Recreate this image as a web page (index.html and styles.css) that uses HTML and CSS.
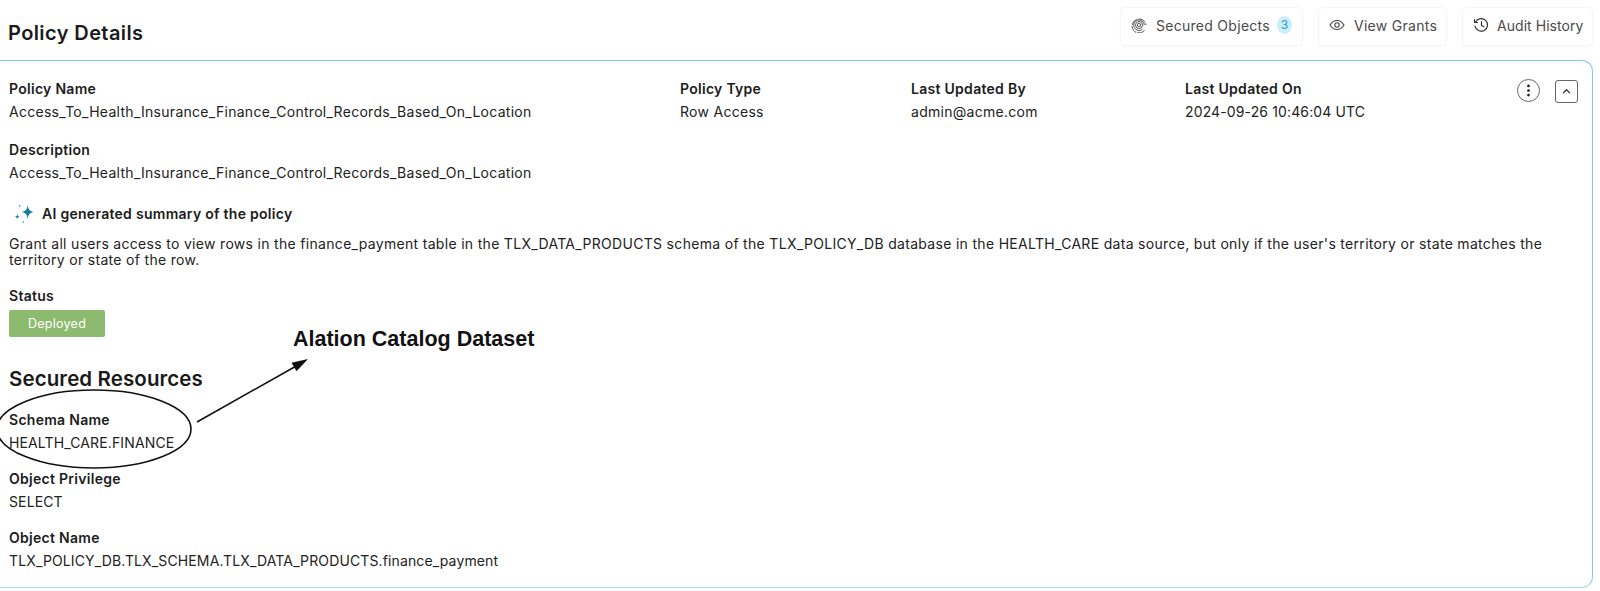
FILE: index.html
```html
<!DOCTYPE html>
<html lang="en">
<head>
<meta charset="utf-8">
<title>Policy Details</title>
<link rel="stylesheet" href="styles.css">
</head>
<body>
<header class="topbar">
  <h1 class="page-title">Policy Details</h1>
  <nav class="actions">
    <button class="action action-secured">
      <svg class="action-icon" viewBox="0 0 16 16"><g fill="none" stroke="#444" stroke-width=".9"><path d="M13.500 13.500A7 7 0 1 1 15 8" stroke-dasharray="8 1"/><path d="M11.500 12.200A5.300 5.300 0 1 1 13.300 8"/><circle cx="8" cy="8" r="3.500"/><circle cx="8" cy="8" r="1.600"/></g></svg>
      <span>Secured Objects</span><span class="count">3</span>
    </button>
    <button class="action action-grants">
      <svg class="action-icon" viewBox="0 0 16 16"><g fill="none" stroke="#444" stroke-width="1.1"><path d="M1 8c2-3.200 4.300-4.500 7-4.500S13 4.800 15 8c-2 3.200-4.300 4.500-7 4.500S3 11.200 1 8z"/><circle cx="8" cy="8" r="2.200"/></g></svg>
      <span>View Grants</span>
    </button>
    <button class="action action-audit">
      <svg class="action-icon" viewBox="0 0 16 16"><g fill="none" stroke="#333" stroke-width="1.200" stroke-linecap="round" stroke-linejoin="round"><path d="M2.600 5A6.300 6.300 0 1 1 2 9"/><path d="M1.500 2.500v3h3"/><path d="M8.500 4.800v3.600l2.400 1.400"/></g></svg>
      <span>Audit History</span>
    </button>
  </nav>
</header>

<main class="card">
  <div class="controls">
    <button class="kebab" aria-label="More"><svg viewBox="0 0 23 23"><circle cx="11.500" cy="6.500" r="1.500"/><circle cx="11.500" cy="11.500" r="1.500"/><circle cx="11.500" cy="16.500" r="1.500"/></svg></button>
    <button class="collapse" aria-label="Collapse"><svg viewBox="0 0 23 23"><path d="M8 13l3.500-3.500L15 13"/></svg></button>
  </div>

  <section class="meta-row">
    <div class="field col-name"><div class="label">Policy Name</div><div class="value">Access_To_Health_Insurance_Finance_Control_Records_Based_On_Location</div></div>
    <div class="field col-type"><div class="label">Policy Type</div><div class="value">Row Access</div></div>
    <div class="field col-by"><div class="label">Last Updated By</div><div class="value">admin@acme.com</div></div>
    <div class="field"><div class="label">Last Updated On</div><div class="value value-tight">2024-09-26 10:46:04 UTC</div></div>
  </section>

  <section class="field gap-desc"><div class="label">Description</div><div class="value">Access_To_Health_Insurance_Finance_Control_Records_Based_On_Location</div></section>

  <section class="ai-head">
    <svg class="spark" viewBox="0 0 20 20"><path fill="#1c7d96" d="M13.700 2c.6 4.500 2 6.200 6.300 7-4.300.8-5.700 2.500-6.300 7-.6-4.500-2-6.200-6.300-7 4.300-.8 5.700-2.500 6.300-7z"/><path fill="#1c7d96" d="M3.300 11c.3 1.800.8 2.400 2.700 2.700-1.900.3-2.400.9-2.700 2.700-.3-1.800-.8-2.400-2.700-2.700 1.900-.3 2.400-.9 2.700-2.700z"/><circle cx="5.700" cy="3" r=".8" fill="#1c7d96"/><circle cx="9.300" cy="19" r=".8" fill="#1c7d96"/></svg>
    <span class="ai-title">AI generated summary of the policy</span>
  </section>
  <p class="summary">Grant all users access to view rows in the finance_payment table in the TLX_DATA_PRODUCTS schema of the TLX_POLICY_DB database in the HEALTH_CARE data source, but only if the user's territory or state matches the territory or state of the row.</p>

  <section class="field gap-status"><div class="label">Status</div><div class="badge">Deployed</div></section>

  <h2 class="section-title">Secured Resources</h2>
  <section class="field gap-schema"><div class="label">Schema Name</div><div class="value value-tight">HEALTH_CARE.FINANCE</div></section>
  <section class="field gap-object"><div class="label">Object Privilege</div><div class="value value-tight">SELECT</div></section>
  <section class="field gap-object"><div class="label">Object Name</div><div class="value value-tight">TLX_POLICY_DB.TLX_SCHEMA.TLX_DATA_PRODUCTS.finance_payment</div></section>
</main>

<svg class="annotation" viewBox="0 0 320 130">
  <ellipse cx="94" cy="79" rx="97" ry="39" fill="none" stroke="#111" stroke-width="1.600"/>
  <path d="M197 72L298 15" fill="none" stroke="#111" stroke-width="1.600"/>
  <path d="M308 9L296.500 21.300l-5-8.600z" fill="#111"/>
</svg>
<div class="annotation-label">Alation Catalog Dataset</div>
</body>
</html>
```
FILE: styles.css
```css
* { box-sizing: border-box; }
html, body { margin: 0; padding: 0; }
body {
  position: relative;
  width: 1600px;
  height: 591px;
  overflow: hidden;
  background: #fff;
  color: #1b1b1b;
  font-family: "Inter", "Liberation Sans", sans-serif;
  font-size: 14px;
  letter-spacing: .28px;
}
.topbar {
  display: flex;
  justify-content: space-between;
  align-items: center;
  height: 60px;
  padding: 0 7px 8px 8px;
}
.page-title { margin: 14px 0 0; font-size: 20px; font-weight: 600; letter-spacing: .4px; color: #1a1a1a; }
.actions { display: flex; gap: 15px; }
.action {
  display: flex;
  align-items: center;
  gap: 9px;
  height: 39px;
  padding: 0 10px 2px;
  background: #fff;
  border: 1px solid #f4f5f6;
  border-radius: 5px;
  box-shadow: 0 1px 2px rgba(0,0,0,.03);
  font: inherit;
  letter-spacing: inherit;
  color: #4a4a4a;
  white-space: nowrap;
}
.action-secured { width: 183px; }
.action-grants { width: 129px; }
.action-audit { width: 131px; gap: 8px; letter-spacing: .05px; }
.action-icon { width: 16px; height: 16px; flex: none; }
.count {
  width: 18px; height: 18px;
  margin-left: -2px;
  border-radius: 50%;
  background: #c9eefa;
  color: #2b9cc0;
  font-size: 12px;
  line-height: 18px;
  text-align: center;
}
.card {
  position: relative;
  height: 528px;
  width: 1593px;
  padding: 19px 8px 0 9px;
  border: 1px solid #82d0dc;
  border-left: 0;
  border-bottom-color: #a4dce5;
  border-radius: 0 11px 11px 0;
}
.controls {
  position: absolute;
  top: 19px; right: 14px;
  display: flex; align-items: flex-start; gap: 15px;
}
.kebab, .collapse { padding: 0; background: #fff; border: 1px solid #666; display: block; }
.kebab { width: 23px; height: 23px; margin-top: -1px; border-radius: 50%; }
.collapse { width: 23px; height: 23px; border-radius: 3px; }
.kebab svg, .collapse svg { display: block; width: 21px; height: 21px; }
.kebab circle { fill: #222; }
.collapse path { fill: none; stroke: #333; stroke-width: 1.400; stroke-linecap: round; stroke-linejoin: round; }
.meta-row { display: flex; }
.col-name { width: 671px; }
.col-type { width: 231px; }
.col-by { width: 274px; }
.label { font-weight: 600; line-height: 18px; color: #1c1c1c; }
.value { margin-top: 5px; line-height: 18px; color: #222; }
.value-tight { letter-spacing: .13px; }
.gap-desc { margin-top: 20px; }
.ai-head { display: flex; align-items: center; margin-top: 21px; height: 20px; padding-left: 5px; }
.spark { width: 20px; height: 20px; flex: none; }
.ai-title { margin-left: 8px; font-weight: 600; }
.summary { margin: 13px 0 0; line-height: 16px; width: 1560px; letter-spacing: .31px; color: #222; }
.gap-status { margin-top: 19px; }
.badge {
  margin-top: 5px;
  width: 96px; height: 27px;
  border-radius: 2px;
  background: #8cba6f;
  color: #fff;
  font-size: 12.500px;
  line-height: 27px;
  text-align: center;
}
.section-title { margin: 29px 0 0; font-size: 20.500px; font-weight: 600; letter-spacing: .1px; line-height: 26px; color: #1a1a1a; }
.gap-schema { margin-top: 19px; }
.gap-object { margin-top: 18px; }
.annotation {
  position: absolute;
  left: 0; top: 350px;
  width: 320px; height: 130px;
  overflow: visible;
}
.annotation-label {
  position: absolute;
  left: 293px; top: 327px;
  font-family: "Liberation Sans", Arial, sans-serif;
  font-size: 21.500px;
  font-weight: 700;
  letter-spacing: 0;
  color: #111;
}
```
